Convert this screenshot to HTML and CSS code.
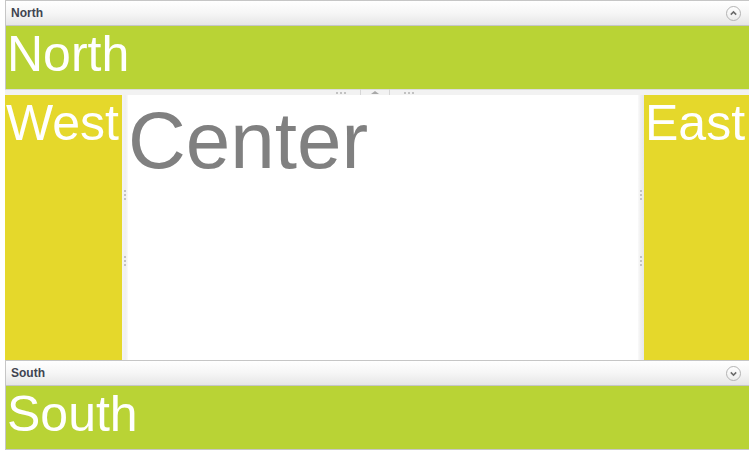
FILE: index.html
```html
<!DOCTYPE html>
<html>
<head>
<meta charset="utf-8">
<link rel="stylesheet" href="styles.css">
</head>
<body>
<div class="layout">
  <section class="panel north">
    <header class="panel-header">
      <span class="panel-title">North</span>
      <span class="collapse-btn">
        <svg width="15" height="15" viewBox="0 0 15 15"><circle cx="7.5" cy="7.5" r="7" fill="url(#g1)" stroke="#b3b3b3"/><defs><linearGradient id="g1" x1="0" y1="0" x2="0" y2="1"><stop offset="0" stop-color="#ffffff"/><stop offset="1" stop-color="#ececec"/></linearGradient></defs><path d="M4.8 8.6 L7.5 5.9 L10.2 8.6" fill="none" stroke="#6a6a6a" stroke-width="1.5"/></svg>
      </span>
    </header>
    <div class="panel-body green"><span class="big">North</span></div>
  </section>
  <div class="hsplitter">
    <span class="hdots"><i></i><i></i><i></i></span>
    <span class="hsep"></span>
    <span class="tri"></span>
    <span class="hsep"></span>
    <span class="hdots"><i></i><i></i><i></i></span>
  </div>
  <div class="middle">
    <div class="west yellow"><span class="big">West</span></div>
    <div class="vsplitter left">
      <span class="vdots"><i></i><i></i><i></i></span>
      <span class="vdots"><i></i><i></i><i></i></span>
    </div>
    <div class="center"><span class="center-text">Center</span></div>
    <div class="vsplitter right">
      <span class="vdots"><i></i><i></i><i></i></span>
      <span class="vdots"><i></i><i></i><i></i></span>
    </div>
    <div class="east yellow"><span class="big">East</span></div>
  </div>
  <section class="panel south">
    <header class="panel-header">
      <span class="panel-title">South</span>
      <span class="collapse-btn">
        <svg width="15" height="15" viewBox="0 0 15 15"><circle cx="7.5" cy="7.5" r="7" fill="url(#g2)" stroke="#b3b3b3"/><defs><linearGradient id="g2" x1="0" y1="0" x2="0" y2="1"><stop offset="0" stop-color="#ffffff"/><stop offset="1" stop-color="#ececec"/></linearGradient></defs><path d="M4.8 6.4 L7.5 9.1 L10.2 6.4" fill="none" stroke="#6a6a6a" stroke-width="1.5"/></svg>
      </span>
    </header>
    <div class="panel-body green"><span class="big">South</span></div>
  </section>
</div>
</body>
</html>
```

FILE: styles.css
```css
html, body {
  margin: 0;
  padding: 0;
  overflow: hidden;
  background: #ffffff;
  width: 749px;
  height: 453px;
}
.layout {
  margin-left: 5px;
  width: 746px;
  display: flex;
  flex-direction: column;
  font-family: "Liberation Sans", Arial, sans-serif;
}
.panel {
  border: 1px solid #c6c6c6;
  display: flex;
  flex-direction: column;
}
.north {
  border-bottom: none;
}
.panel-header {
  height: 24px;
  border-bottom: 1px solid #c6c6c6;
  background: linear-gradient(to bottom, #ffffff 0%, #f6f6f6 50%, #e6e6e6 100%);
  display: flex;
  align-items: center;
  justify-content: space-between;
  padding: 0 9px 0 5px;
}
.panel-title {
  font-size: 12px;
  font-weight: bold;
  color: #3f4450;
}
.collapse-btn {
  display: flex;
  width: 15px;
  height: 15px;
}
.panel-body {
  height: 63px;
  overflow: hidden;
}
.green {
  background: #b9d335;
}
.yellow {
  background: #e5d82b;
}
.big {
  display: block;
  font-size: 50px;
  line-height: 56px;
  color: #ffffff;
  padding-left: 1px;
  white-space: nowrap;
}
.hsplitter {
  height: 5px;
  border-top: 1px solid #dcdcdc;
  background: #f2f2f2;
  display: flex;
  justify-content: center;
  align-items: center;
  gap: 0;
  padding-right: 7px;
}
.hdots {
  display: flex;
  gap: 2px;
  margin: 0 14px;
}
.hdots i, .vdots i {
  display: block;
  width: 2px;
  height: 2px;
  background: #c2c2c2;
}
.hsep {
  width: 1px;
  height: 6px;
  background: #d6d6d6;
  align-self: flex-end;
}
.tri {
  width: 0;
  height: 0;
  border-left: 4px solid transparent;
  border-right: 4px solid transparent;
  border-bottom: 3px solid #a8a8a8;
  margin: 0 10px;
}
.middle {
  height: 265px;
  display: flex;
}
.west {
  width: 117px;
  overflow: hidden;
}
.vsplitter {
  width: 6px;
  display: flex;
  flex-direction: column;
  justify-content: center;
  align-items: center;
  gap: 56px;
}
.vsplitter.left {
  background: linear-gradient(to right, #f4f4f4, #f0f0f0 60%, #fafafa);
}
.vsplitter.right {
  background: linear-gradient(to right, #fafafa, #f0f0f0 40%, #e8e8e8);
}
.vdots {
  display: flex;
  flex-direction: column;
  gap: 2px;
}
.center {
  width: 510px;
  background: #ffffff;
  overflow: hidden;
}
.center-text {
  display: block;
  font-size: 80px;
  color: #808080;
  white-space: nowrap;
}
.east {
  flex: 1;
  overflow: hidden;
}
.east .big {
  padding-left: 1px;
}
```
